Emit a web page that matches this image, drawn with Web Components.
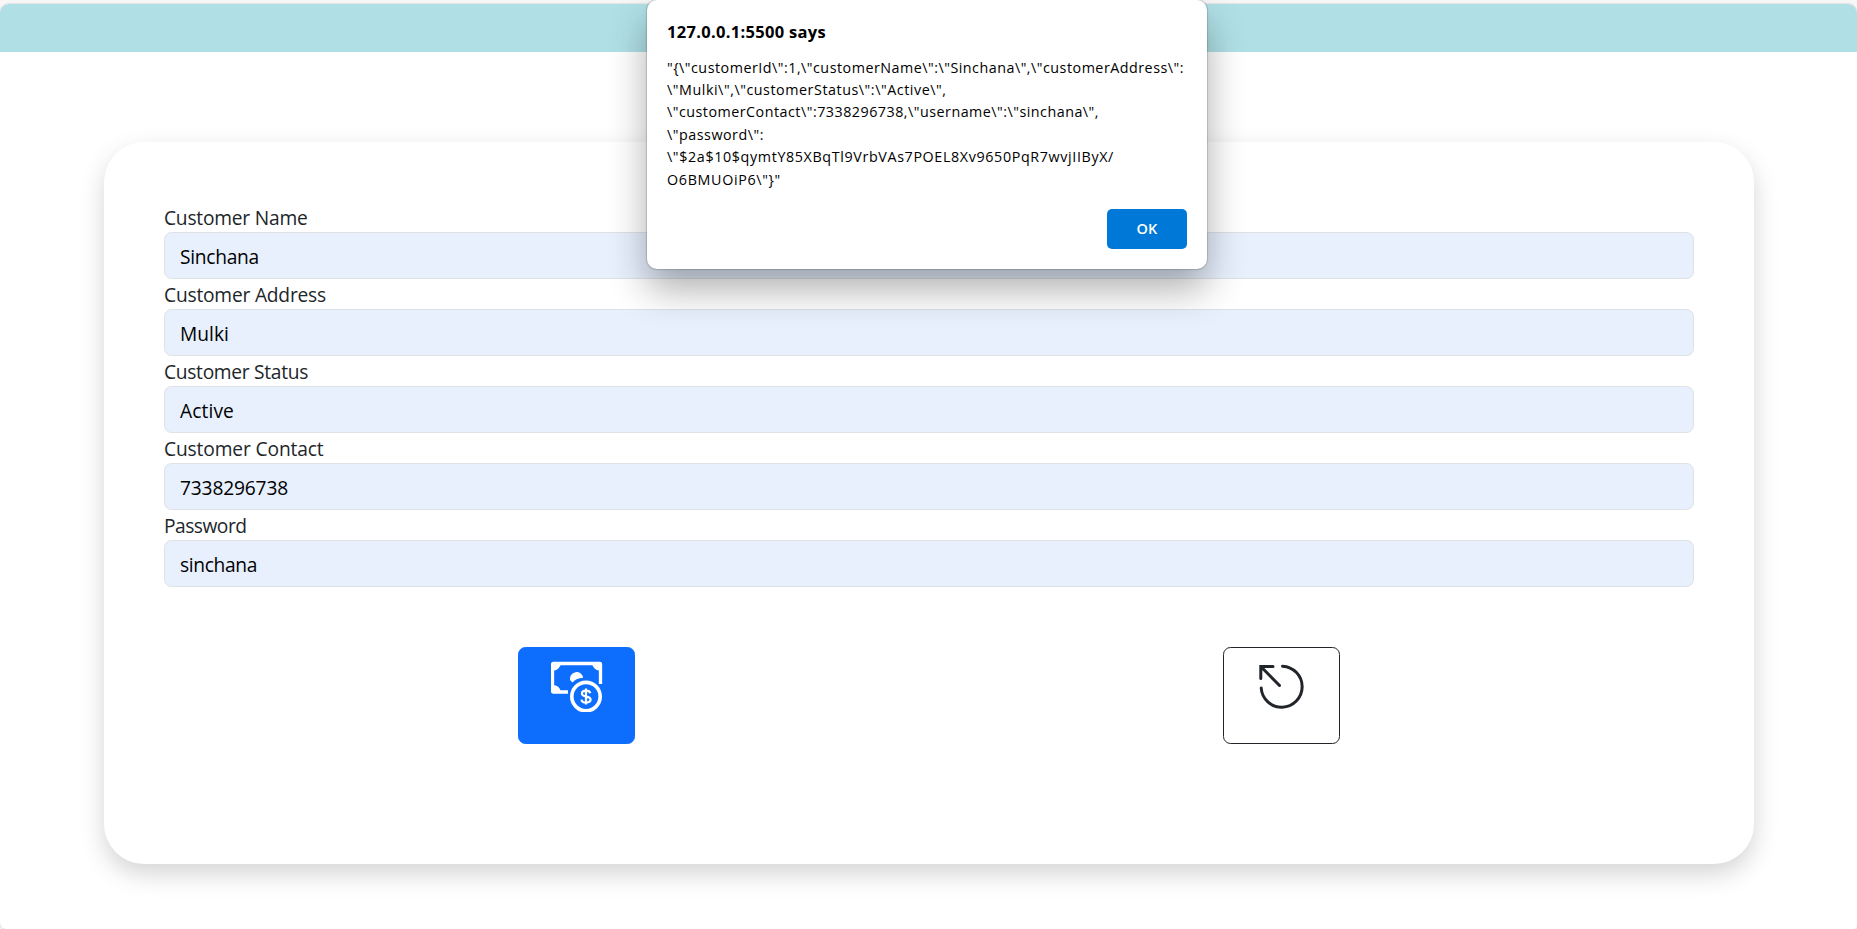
<!DOCTYPE html>
<html lang="en">
<head>
<meta charset="utf-8">
<title>Customer</title>
<style>
html, body { margin: 0; height: 100%; overflow: hidden; background: #f7f7f7; }
body { font-family: "Open Sans", "Noto Sans", sans-serif; font-weight: 400; color: #212529; }
</style>
</head>
<body>
<customer-page>
  <customer-card>
    <form-field><text-run slot="label" width="143.5">Customer Name</text-run><text-run width="79">Sinchana</text-run></form-field>
    <form-field><text-run slot="label" width="162">Customer Address</text-run><text-run width="49">Mulki</text-run></form-field>
    <form-field><text-run slot="label" width="144">Customer Status</text-run><text-run width="54">Active</text-run></form-field>
    <form-field><text-run slot="label" width="159.5">Customer Contact</text-run><text-run width="108">7338296738</text-run></form-field>
    <form-field><text-run slot="label" width="82.5">Password</text-run><text-run width="77">sinchana</text-run></form-field>
    <icon-button slot="actions" kind="primary">
      <svg width="52" height="52" viewBox="1 0 52 52" fill="none">
        <path d="M18 32H3.400a.9.9 0 0 1-.9-.9V4.400a.9.9 0 0 1 .9-.9h46.200a.9.9 0 0 1 .9.9V24" stroke="#fff" stroke-width="3.300"/>
        <path d="M2 3h9a8 8 0 0 1-9 7.500zM51 3h-9a8 8 0 0 0 9 7.500zM2 32.500h9a8 8 0 0 0-9-7.500z" fill="#fff"/>
        <path d="M20 20a6.700 6.700 0 1 1 13.200-2.300C28 18 24.500 20 22.500 22.500z" fill="#fff"/>
        <circle cx="36" cy="36.600" r="14.200" stroke="#fff" stroke-width="3.600"/>
        <path d="M40.300 33.200c-.4-1.800-2-2.600-4.200-2.600-2.500 0-4.200 1.100-4.200 3 0 4.400 8.700 1.700 8.700 6 0 1.900-1.900 3-4.500 3-2.500 0-4.300-1-4.600-3M36 28.600v16" stroke="#fff" stroke-width="2.200"/>
      </svg>
    </icon-button>
    <icon-button slot="actions" kind="outline">
      <svg width="52" height="52" viewBox="0.500 0 52 52" fill="none" stroke="#212529" stroke-width="3" stroke-linecap="round">
        <path d="M27 6.200A20.500 20.500 0 1 1 5.700 28M5.300 18.500V6.500H17.500M5.800 7l18.200 18.500"/>
      </svg>
    </icon-button>
  </customer-card>
  <alert-dialog slot="overlay">
    <text-run slot="title" width="159">127.0.0.1:5500 says</text-run>
    <text-run width="517">"{\"customerId\":1,\"customerName\":\"Sinchana\",\"customerAddress\":</text-run>
    <text-run width="279.5">\"Mulki\",\"customerStatus\":\"Active\",</text-run>
    <text-run width="432">\"customerContact\":7338296738,\"username\":\"sinchana\",</text-run>
    <text-run width="97">\"password\":</text-run>
    <text-run width="447">\"$2a$10$qymtY85XBqTl9VrbVAs7POEL8Xv9650PqR7wvjIIByX/</text-run>
    <text-run width="114">O6BMUOiP6\"}"</text-run>
    <text-run slot="ok" width="21">OK</text-run>
  </alert-dialog>
</customer-page>
<script>
class Base extends HTMLElement {
  constructor() {
    super();
    this.attachShadow({ mode: "open" }).innerHTML = this.constructor.html;
  }
}

customElements.define("customer-page", class extends Base {
  static html = `<style>
    :host { display: block; height: 929px; padding-top: 4px; box-sizing: border-box; background: #f7f7f7; position: relative; }
    .page { height: 925px; background: #fff; border-radius: 9px 9px 3px 6px; overflow: hidden; box-shadow: 0 0 2px rgba(0,0,0,.25); }
    header { height: 48px; background: #b0e0e6; }
    main { padding: 90px 103px 0 104px; }
  </style><div class="page"><header></header><main><slot></slot></main></div><slot name="overlay"></slot>`;
});

customElements.define("customer-card", class extends Base {
  static html = `<style>
    :host { display: block; box-sizing: border-box; height: 722px; padding: 60px; border-radius: 40px; background: #fff; box-shadow: 0 10px 24px rgba(0,0,0,.17); }
    .actions { display: grid; grid-template-columns: 1fr 1fr; justify-items: center; padding: 60px 60px 0; }
  </style><slot></slot><div class="actions"><slot name="actions"></slot></div>`;
});

customElements.define("form-field", class extends Base {
  static html = `<style>
    :host { display: block; font-size: 19.2px; line-height: 30px; }
    .label { display: block; height: 30px; padding-top: 1px; box-sizing: border-box; }
    .box { height: 47px; box-sizing: border-box; border: 1px solid #dee2e6; border-radius: 7.5px; background: #e8f0fe; padding: 9px 15px 0; color: #000; }
  </style><div class="label"><slot name="label"></slot></div><div class="box"><slot></slot></div>`;
});

customElements.define("icon-button", class extends Base {
  static html = `<style>
    :host { display: flex; box-sizing: border-box; width: 117px; height: 97px; justify-content: center; padding-top: 12px; border: 1px solid #212529; border-radius: 7.5px; }
    :host([kind="primary"]) { background: #0d6efd; border-color: #0d6efd; }
  </style><slot></slot>`;
});

customElements.define("alert-dialog", class extends Base {
  static html = `<style>
    :host { position: absolute; left: 647px; top: 0; width: 560px; height: 269px; box-sizing: border-box; padding: 20px; border-radius: 10px; background: #fff; color: #000;
      box-shadow: 0 0 0 1px rgba(0,0,0,.1), 0 0 3px rgba(0,0,0,.12), 0 20px 38px rgba(0,0,0,.32); }
    .title { height: 24px; line-height: 24px; font-size: 16.500px; font-weight: 700; }
    .body { display: flex; flex-direction: column; padding-top: 12.600px; font-size: 14.300px; line-height: 22.400px; }
    .foot { display: flex; justify-content: flex-end; padding-top: 18px; }
    .ok { width: 80px; height: 40px; border-radius: 5px; background: #0078d7; color: #fff; font-size: 14.500px; font-weight: 600; line-height: 40px; display: flex; justify-content: center; }
  </style><div class="title"><slot name="title"></slot></div><div class="body"><slot></slot></div><div class="foot"><div class="ok"><slot name="ok"></slot></div></div>`;
});

/* One line of text whose tracking is set so that it spans its width attribute. */
customElements.define("text-run", class extends Base {
  static html = `<style>:host { display: block; white-space: pre; width: max-content; }</style><span><slot></slot></span>`;
  connectedCallback() {
    const span = this.shadowRoot.querySelector("span");
    const spare = Number(this.getAttribute("width")) - span.getBoundingClientRect().width;
    this.style.letterSpacing = spare / this.textContent.length + "px";
  }
});
</script>
</body>
</html>
